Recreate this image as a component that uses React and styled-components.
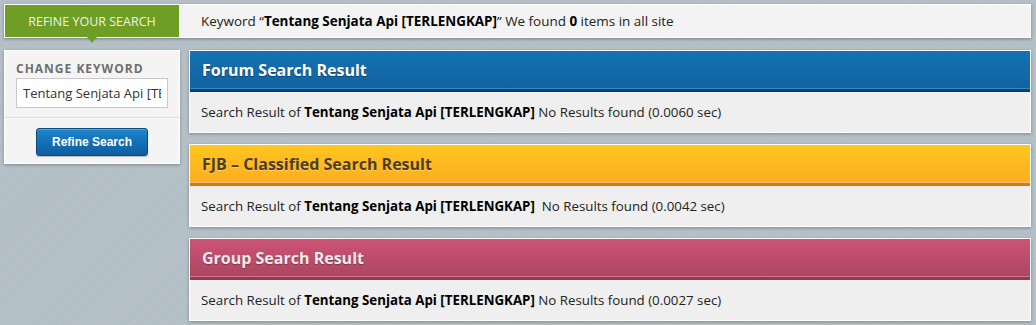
import React from "react";
import styled, { createGlobalStyle } from "styled-components";

const Global = createGlobalStyle`
  html, body { margin: 0; padding: 0; }
  body {
    background-color: #b3bfc6;
    background-image: repeating-linear-gradient(
      -45deg,
      rgba(255,255,255,0.045) 0px,
      rgba(255,255,255,0.045) 1px,
      rgba(0,0,0,0) 1px,
      rgba(0,0,0,0) 3px
    );
    font-family: "Open Sans", "Noto Sans", sans-serif;
    width: 1036px;
    height: 325px;
    overflow: hidden;
  }
`;

const Page = styled.div`
  padding: 4px 5px 0 4px;
  display: flex;
  flex-direction: column;
  gap: 12px;
`;

const TopBar = styled.div`
  display: flex;
  align-items: stretch;
  height: 32px;
  width: 1025px;
  background: #f3f3f3;
  border: 1px solid #ffffff;
  box-shadow: 0 1px 3px rgba(0, 0, 0, 0.35);
`;

const RefineTab = styled.div`
  position: relative;
  width: 174px;
  background: #6f9e24;
  color: #eef4e2;
  font-size: 12.5px;
  display: flex;
  align-items: center;
  justify-content: center;

  &::after {
    content: "";
    position: absolute;
    left: 82px;
    bottom: -6px;
    border-left: 5px solid transparent;
    border-right: 5px solid transparent;
    border-top: 6px solid #6f9e24;
  }
`;

const KeywordInfo = styled.div`
  padding-left: 22px;
  font-size: 13.45px;
  line-height: 32px;
  color: #222;
  white-space: pre;

  b { color: #000; }
`;

const Content = styled.div`
  display: flex;
  align-items: flex-start;
  gap: 9px;
`;

const Sidebar = styled.div`
  width: 174px;
  background: #f4f4f4;
  border: 1px solid #ffffff;
  box-shadow: 0 1px 3px rgba(0, 0, 0, 0.3);
  display: flex;
  flex-direction: column;
`;

const SideSection = styled.div`
  padding: ${(p) => p.$pad};
  display: flex;
  flex-direction: column;
  align-items: ${(p) => (p.$center ? "center" : "stretch")};
  border-top: ${(p) => (p.$divider ? "1px solid #dcdcdc" : "none")};
  box-shadow: ${(p) => (p.$divider ? "inset 0 1px 0 #fafafa" : "none")};
`;

const SideLabel = styled.div`
  font-size: 12px;
  font-weight: 700;
  color: #6e6e6e;
  letter-spacing: 1px;
  margin-bottom: 2px;
  line-height: 14px;
`;

const KeywordInput = styled.input`
  box-sizing: border-box;
  width: 152px;
  height: 30px;
  border: 1px solid #c9c9c9;
  background: #fff;
  font-family: "Open Sans", "Noto Sans", sans-serif;
  font-size: 13px;
  color: #333;
  padding: 0 6px;
  outline: none;
`;

const RefineButton = styled.button`
  width: 112px;
  height: 28px;
  border: 1px solid #0c4a7c;
  border-radius: 3px;
  background: linear-gradient(to bottom, #1f85cc 0%, #1470b6 50%, #0e5f9f 100%);
  box-shadow: inset 0 1px 0 rgba(255, 255, 255, 0.25), 0 1px 1px rgba(0, 0, 0, 0.25);
  color: #fff;
  font-family: "Liberation Sans", Arial, sans-serif;
  font-weight: 700;
  font-size: 12px;
  padding: 0;
  cursor: pointer;
`;

const Results = styled.div`
  flex: 1;
  display: flex;
  flex-direction: column;
  gap: 11px;
  width: 842px;
`;

const themes = {
  blue: {
    top: "#1472b4",
    bottom: "#1262a0",
    line: "#2c8ac8",
    band: "#0b3f66",
    text: "#ffffff",
    shadow: "0 1px 1px rgba(0,0,0,0.35)",
  },
  yellow: {
    top: "#ffc61f",
    bottom: "#feae1f",
    line: "#f5c36a",
    band: "#d07a14",
    text: "#4d3d1d",
    shadow: "0 1px 0 rgba(255,255,255,0.35)",
  },
  pink: {
    top: "#cd5373",
    bottom: "#ac4761",
    line: "#d8728d",
    band: "#8e3a4f",
    text: "#f6e8ec",
    shadow: "0 1px 1px rgba(0,0,0,0.3)",
  },
};

const Panel = styled.div`
  background: #efefef;
  border: 1px solid #ffffff;
  box-shadow: 0 1px 3px rgba(0, 0, 0, 0.3);
`;

const PanelHeader = styled.div`
  height: 37px;
  line-height: 39px;
  padding-left: 12px;
  background: linear-gradient(to bottom, ${(p) => themes[p.$tone].top}, ${(p) => themes[p.$tone].bottom});
  border-bottom: 1px solid ${(p) => themes[p.$tone].line};
  box-shadow: 0 3px 0 ${(p) => themes[p.$tone].band};
  margin-bottom: 3px;
  color: ${(p) => themes[p.$tone].text};
  text-shadow: ${(p) => themes[p.$tone].shadow};
  font-size: 16px;
  font-weight: 700;
  overflow: hidden;
`;

const PanelBody = styled.div`
  height: 40px;
  line-height: 40px;
  padding-left: 11px;
  font-size: 13.3px;
  color: #222;
  white-space: pre;

  b { color: #000; }
`;

const results = [
  { tone: "blue", title: "Forum Search Result", gap: " ", time: "0.0060" },
  { tone: "yellow", title: "FJB \u2013 Classified Search Result", gap: "  ", time: "0.0042" },
  { tone: "pink", title: "Group Search Result", gap: " ", time: "0.0027" },
];

export default function App() {
  return (
    <>
      <Global />
      <Page>
        <TopBar>
          <RefineTab>REFINE YOUR SEARCH</RefineTab>
          <KeywordInfo>
            {"Keyword \u201C"}<b>Tentang Senjata Api [TERLENGKAP]</b>{"\u201D We found "}<b>0</b>{" items in all site"}
          </KeywordInfo>
        </TopBar>
        <Content>
          <Sidebar>
            <SideSection $pad="11px 11px 9px 11px">
              <SideLabel>CHANGE KEYWORD</SideLabel>
              <KeywordInput defaultValue="Tentang Senjata Api [TERLENGKAP]" />
            </SideSection>
            <SideSection $pad="10px 0 7px 0" $center $divider>
              <RefineButton>Refine Search</RefineButton>
            </SideSection>
          </Sidebar>
          <Results>
            {results.map((r) => (
              <Panel key={r.tone}>
                <PanelHeader $tone={r.tone}>{r.title}</PanelHeader>
                <PanelBody>
                  {"Search Result of "}<b>Tentang Senjata Api [TERLENGKAP]</b>{r.gap + "No Results found (" + r.time + " sec)"}
                </PanelBody>
              </Panel>
            ))}
          </Results>
        </Content>
      </Page>
    </>
  );
}
